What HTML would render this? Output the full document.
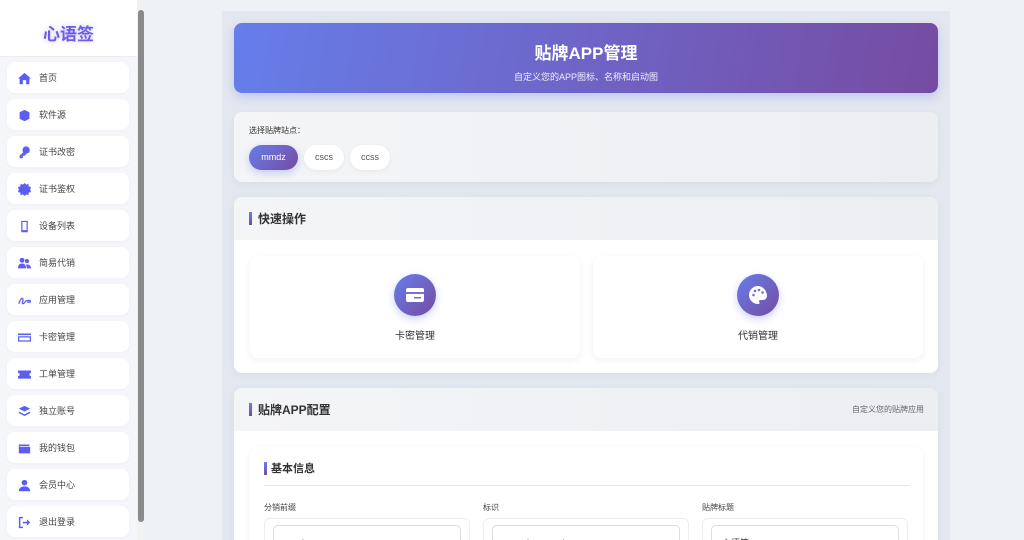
<!DOCTYPE html>
<html><head><meta charset="utf-8"><style>
*{box-sizing:border-box;margin:0;padding:0}
html,body{width:1024px;height:540px;overflow:hidden}
body{font-family:"Liberation Sans","Noto Sans CJK SC",sans-serif;background:#eef1f6;color:#333}
#root{position:relative;width:1024px;height:540px;overflow:hidden}
.side{position:absolute;left:0;top:0;width:137px;height:540px;background:#f4f6fa}
.logo{height:57px;background:#fff;border-bottom:1px solid #eceef3;text-align:center;line-height:69px;font-size:17px;font-weight:bold;color:#6c5ce7;text-shadow:0 0 6px rgba(108,92,231,.35)}
.nav{position:absolute;left:7px;width:122px;height:31px;background:#fff;border-radius:8px;font-size:9px;color:#444;line-height:33px;padding-left:32px;box-shadow:0 1px 3px rgba(0,0,0,.03)}
.nav svg{position:absolute;left:11px;top:10px;width:13px;height:13px;fill:#5b5ef0}
.sb{position:absolute;left:137px;top:0;width:8px;height:540px;background:#f1f1f1}
.sb div{position:absolute;left:1px;top:10px;width:6px;height:512px;background:#8a8a8a;border-radius:3px}
.wrap{position:absolute;left:222px;top:11px;width:728px;height:540px;background:#e3e7ef}
.hdr{position:absolute;left:234px;top:23px;width:704px;height:70px;border-radius:8px;background:linear-gradient(100deg,#667eea,#764ba2);color:#fff;text-align:center;box-shadow:0 4px 10px rgba(102,126,234,.3)}
.hdr h1{font-size:17px;margin-top:16px}
.hdr p{font-size:9px;margin-top:6px;opacity:.9}
.card{position:absolute;left:234px;width:704px;background:#fff;border-radius:8px;overflow:hidden;box-shadow:0 2px 8px rgba(0,0,0,.05)}
.ch{height:43px;background:linear-gradient(90deg,#f4f5f7,#eceef2);font-size:12px;font-weight:bold;line-height:44px;padding-left:24px;position:relative}
.ch:before{content:"";position:absolute;left:15px;top:15px;width:3px;height:13px;background:linear-gradient(#667eea,#764ba2)}
.pill{position:absolute;top:145px;height:25px;border-radius:13px;background:#fff;font-size:9px;line-height:25px;text-align:center;color:#555;box-shadow:0 1px 4px rgba(0,0,0,.06)}
.qc{position:absolute;top:256px;width:330px;height:102px;background:#fff;border-radius:8px;box-shadow:0 2px 8px rgba(0,0,0,.06);text-align:center;font-size:10px;color:#333}
.qc .ic{width:42px;height:42px;border-radius:50%;background:linear-gradient(135deg,#667eea,#764ba2);margin:18px auto 11px;box-shadow:0 3px 8px rgba(102,126,234,.35);display:flex;align-items:center;justify-content:center}
.lbl{position:absolute;top:502px;font-size:8px;color:#444}
.inp{position:absolute;top:518px;width:206px;height:40px;border:1px solid #eee;border-radius:6px;background:#fff}
.inp div{position:absolute;left:8px;top:6px;right:8px;height:30px;border:1px solid #ddd;border-radius:5px;font-size:9px;line-height:10px;padding:12px 10px 0;color:#333}
</style></head><body><div id="root">
<div class="side">
<div class="logo">心语签</div>
</div>
<div class="nav" style="top:62px"><svg viewBox="0 0 16 16"><path d="M8 1L0 8h2v7h4v-5h4v5h4V8h2z"/></svg>首页</div>
<div class="nav" style="top:99px"><svg viewBox="0 0 16 16"><path d="M8 1l6 3v8l-6 3-6-3V4zM8 7v7"/></svg>软件源</div>
<div class="nav" style="top:136px"><svg viewBox="0 0 16 16"><circle cx="10" cy="5" r="4.5"/><path d="M7 7L2 12v3h3l1-1v-2h2l2-2z"/></svg>证书改密</div>
<div class="nav" style="top:173px"><svg viewBox="0 0 16 16"><path d="M8 0l2 2 3-1 0 3 3 1-1 3 1 3-3 1 0 3-3-1-2 2-2-2-3 1 0-3-3-1 1-3-1-3 3-1 0-3 3 1z"/></svg>证书鉴权</div>
<div class="nav" style="top:210px"><svg viewBox="0 0 16 16"><path d="M4 1h8v14H4zM5.5 2.5v10h5v-10z" fill-rule="evenodd"/></svg>设备列表</div>
<div class="nav" style="top:247px"><svg viewBox="0 0 16 16"><circle cx="5" cy="4" r="3"/><circle cx="11" cy="5" r="2.5"/><path d="M0 14c0-4 2-6 5-6s5 2 5 6zM10 9c3 0 6 1 6 5h-5z"/></svg>简易代销</div>
<div class="nav" style="top:284px"><svg viewBox="0 0 16 16"><path d="M1 12c2-6 4-8 5-6s-2 6 0 6 3-4 5-4h4v2h-4" stroke="#5b5ef0" stroke-width="1.6" fill="none"/></svg>应用管理</div>
<div class="nav" style="top:321px"><svg viewBox="0 0 16 16"><path d="M0 3h16v10H0zM1.5 8v3.5h13V8zM0 5h16v1.5H0z" fill-rule="evenodd"/></svg>卡密管理</div>
<div class="nav" style="top:358px"><svg viewBox="0 0 16 16"><path d="M0 3h16v3a2 2 0 000 4v3H0v-3a2 2 0 000-4z"/></svg>工单管理</div>
<div class="nav" style="top:395px"><svg viewBox="0 0 16 16"><path d="M8 1l7 3.5L8 8 1 4.5zM1 8l7 3.5L15 8v2l-7 3.5L1 10z"/></svg>独立账号</div>
<div class="nav" style="top:432px"><svg viewBox="0 0 16 16"><path d="M1 3h13v2H2v1h13v8H1z"/></svg>我的钱包</div>
<div class="nav" style="top:469px"><svg viewBox="0 0 16 16"><circle cx="8" cy="4.5" r="3.5"/><path d="M1 15c0-4 3-6 7-6s7 2 7 6z"/></svg>会员中心</div>
<div class="nav" style="top:506px"><svg viewBox="0 0 16 16"><path d="M6 2H2v12h4" stroke="#5b5ef0" stroke-width="1.8" fill="none"/><path d="M6 7h5V4l4 4-4 4V9H6z"/></svg>退出登录</div>
<div class="sb"><div></div></div>
<div class="wrap"></div>
<div class="hdr"><h1>贴牌APP管理</h1><p>自定义您的APP图标、名称和启动图</p></div>
<div class="card" style="top:112px;height:70px;background:linear-gradient(90deg,#f4f5f7,#eceef2)"><div style="font-size:8px;padding:13px 0 0 15px;color:#333">选择贴牌站点：</div></div>
<div class="pill" style="left:249px;width:49px;background:linear-gradient(135deg,#667eea,#764ba2);color:#fff;box-shadow:0 3px 8px rgba(102,126,234,.35)">mmdz</div>
<div class="pill" style="left:304px;width:40px">cscs</div>
<div class="pill" style="left:350px;width:40px">ccss</div>
<div class="card" style="top:197px;height:176px"><div class="ch">快速操作</div></div>
<div class="qc" style="left:250px"><div class="ic"><svg width="20" height="16" viewBox="0 0 20 16"><rect x="1" y="1" width="18" height="14" rx="2" fill="#fff"/><rect x="1" y="5" width="18" height="2" fill="#7a6fd8"/><rect x="9" y="10" width="7" height="1.5" fill="#7a6fd8"/></svg></div>卡密管理</div>
<div class="qc" style="left:593px"><div class="ic"><svg width="20" height="20" viewBox="0 0 20 20"><path d="M10 1a9 9 0 100 18c1.5 0 2-1 1.3-2-.7-1 0-2 1.2-2H15a4 4 0 004-4c0-5-4-10-9-10z" fill="#fff"/><circle cx="5.5" cy="10" r="1.3" fill="#7a6fd8"/><circle cx="7" cy="6" r="1.3" fill="#7a6fd8"/><circle cx="11" cy="5" r="1.3" fill="#7a6fd8"/><circle cx="14.5" cy="7.5" r="1.3" fill="#7a6fd8"/></svg></div>代销管理</div>
<div class="card" style="top:388px;height:170px"><div class="ch">贴牌APP配置<span style="position:absolute;right:14px;font-size:8px;font-weight:normal;color:#666">自定义您的贴牌应用</span></div></div>
<div style="position:absolute;left:250px;top:447px;width:673px;height:120px;background:#fff;border-radius:8px;box-shadow:0 2px 8px rgba(0,0,0,.06)"></div>
<div style="position:absolute;left:264px;top:462px;width:3px;height:13px;background:linear-gradient(#667eea,#764ba2)"></div>
<div style="position:absolute;left:271px;top:462px;font-size:11px;font-weight:bold;line-height:14px">基本信息</div>
<div style="position:absolute;left:264px;top:485px;width:645px;height:1px;background:#e2e4f0"></div>
<div class="lbl" style="left:264px">分销前缀</div>
<div class="lbl" style="left:483px">标识</div>
<div class="lbl" style="left:702px">贴牌标题</div>
<div class="inp" style="left:264px"><div>mmdz</div></div>
<div class="inp" style="left:483px"><div>com.cjssy.mmdz</div></div>
<div class="inp" style="left:702px"><div>心语签</div></div>
</div></body></html>
